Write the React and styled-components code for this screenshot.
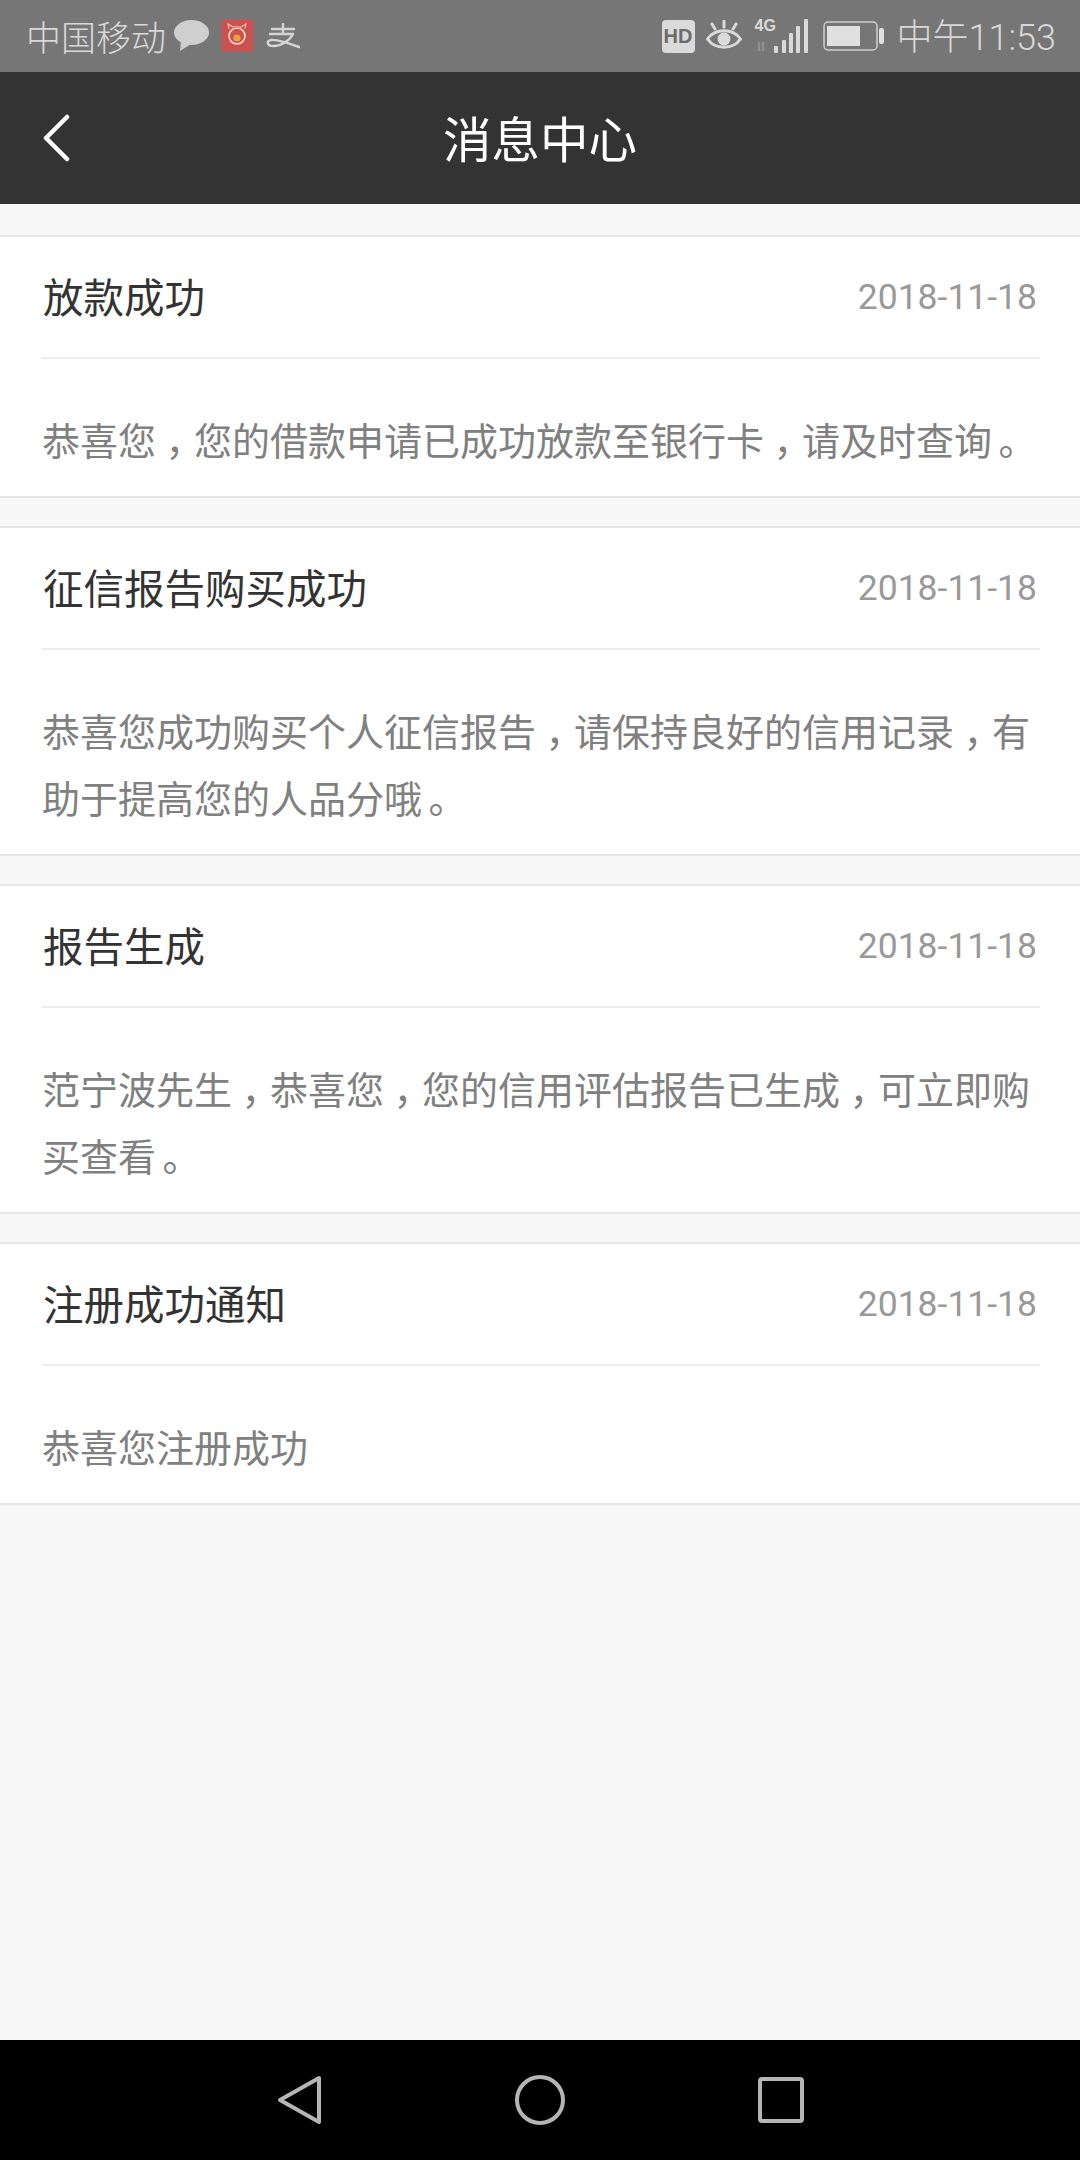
import React from 'react'
import styled, { createGlobalStyle } from 'styled-components'

const FONT = `"Noto Sans CJK SC", "Noto Sans", sans-serif`

const GlobalStyle = createGlobalStyle`
    html, body {
        margin: 0;
        padding: 0;
        background: #f7f7f7;
        font-family: ${FONT};
    }
`

const messages = [
    { title: '放款成功', date: '2018-11-18', body: ['恭喜您，您的借款申请已成功放款至银行卡，请及时查询。'] },
    { title: '征信报告购买成功', date: '2018-11-18', body: ['恭喜您成功购买个人征信报告，请保持良好的信用记录，有', '助于提高您的人品分哦。'] },
    { title: '报告生成', date: '2018-11-18', body: ['范宁波先生，恭喜您，您的信用评估报告已生成，可立即购', '买查看。'] },
    { title: '注册成功通知', date: '2018-11-18', body: ['恭喜您注册成功'] },
]

const WechatIcon = () => (
    <svg width="35" height="32" viewBox="0 0 35 32">
        <ellipse cx="17.5" cy="12.5" rx="17.5" ry="12.5" fill="#cfcfcf" />
        <path d="M7 21 L6 31 L17 24 Z" fill="#cfcfcf" />
    </svg>
)

const PigIcon = () => (
    <svg width="32" height="32" viewBox="0 0 32 32">
        <rect width="32" height="32" rx="2" fill="#cb5052" />
        <path d="M8 9 L7 4 L12 7 C14 6 18 6 20 7 L25 4 L24 9" fill="none" stroke="#f2b9a3" strokeWidth="1.2" />
        <circle cx="16" cy="16" r="8" fill="none" stroke="#f8dcc6" strokeWidth="1.6" />
        <circle cx="16" cy="18" r="3.6" fill="#e8a23c" />
    </svg>
)

const AlipayIcon = () => (
    <svg width="34" height="26" viewBox="0 0 34 26" fill="none" stroke="#d4d4d4" strokeWidth="2.4" strokeLinecap="round" strokeLinejoin="round">
        <path d="M6 6 H28 M17 1 V11 M4 11 H27 C24 17 16 23 7 23 C1 23 0 18 5 17 C11 16 22 20 33 24" />
    </svg>
)

const EyeIcon = () => (
    <svg width="36" height="32" viewBox="0 0 36 32" fill="none" stroke="#dadada" strokeWidth="3">
        <path d="M1.5 19 C9 8 27 8 34.5 19 C27 30 9 30 1.5 19 Z" />
        <circle cx="18" cy="19" r="6.5" fill="#dadada" stroke="none" />
        <path d="M18 1 V7 M6 4 L9 9 M30 4 L27 9" strokeLinecap="round" />
    </svg>
)

const SignalIcon = () => (
    <svg width="54" height="36" viewBox="0 0 54 36" fill="#dadada">
        <rect x="19" y="28" width="4" height="7" rx="1" />
        <rect x="27" y="22" width="4" height="13" rx="1" />
        <rect x="34" y="15" width="4" height="20" rx="1" />
        <rect x="41" y="8" width="4" height="27" rx="1" />
        <rect x="49" y="1" width="4" height="34" rx="1" />
        <path d="M4 24 V33 M8 24 V33" stroke="#8f8f8f" strokeWidth="2.5" />
    </svg>
)

const BatteryIcon = () => (
    <svg width="62" height="30" viewBox="0 0 62 30" fill="none">
        <rect x="1" y="1" width="53" height="28" rx="4" stroke="#cfcfcf" strokeWidth="1.5" />
        <rect x="4" y="5" width="33" height="20" fill="#e0e0e0" />
        <rect x="56" y="7" width="5" height="16" rx="2" fill="#e0e0e0" />
    </svg>
)

const BackArrow = () => (
    <svg width="30" height="48" viewBox="0 0 30 48" fill="none">
        <path d="M26 3 L5 24 L26 45" stroke="#fff" strokeWidth="4.5" strokeLinecap="round" strokeLinejoin="round" />
    </svg>
)

// 标点在格子里居中，和原图的字体一致
const renderLine = line => line.split(/([，。])/).map((part, i) => (
    i % 2 === 1 ? <Punct key={i} $period={part === '。'}>{part}</Punct> : part
))

export default function App () {
    return (
        <Page>
            <GlobalStyle />
            <StatusBar>
                <StatusGroup>
                    <Carrier>中国移动</Carrier>
                    <Slot $gap={8}><WechatIcon /></Slot>
                    <Slot $gap={12}><PigIcon /></Slot>
                    <Slot $gap={13}><AlipayIcon /></Slot>
                </StatusGroup>
                <StatusGroup>
                    <HdBadge>HD</HdBadge>
                    <Slot $gap={11}><EyeIcon /></Slot>
                    <SignalWrap>
                        <NetworkLabel>4G</NetworkLabel>
                        <SignalIcon />
                    </SignalWrap>
                    <Slot $gap={14}><BatteryIcon /></Slot>
                    <Clock>中午11:53</Clock>
                </StatusGroup>
            </StatusBar>
            <Header>
                <BackButton><BackArrow /></BackButton>
                <HeaderTitle>消息中心</HeaderTitle>
            </Header>
            <MessageList>
                {messages.map(item => (
                    <MessageCard key={item.title}>
                        <TitleRow>
                            <Title>{item.title}</Title>
                            <DateText>{item.date}</DateText>
                        </TitleRow>
                        <Body>
                            {item.body.map(line => <BodyLine key={line}>{renderLine(line)}</BodyLine>)}
                        </Body>
                    </MessageCard>
                ))}
            </MessageList>
            <NavBar>
                <svg width="46" height="52" viewBox="0 0 46 52" fill="none">
                    <path d="M43 4 L4 26 L43 48 Z" stroke="#b5b5b5" strokeWidth="4" strokeLinejoin="round" />
                </svg>
                <svg width="50" height="50" viewBox="0 0 50 50" fill="none">
                    <circle cx="25" cy="25" r="23" stroke="#b5b5b5" strokeWidth="4" />
                </svg>
                <svg width="46" height="46" viewBox="0 0 46 46" fill="none">
                    <rect x="2" y="2" width="42" height="42" rx="2" stroke="#b5b5b5" strokeWidth="4" />
                </svg>
            </NavBar>
        </Page>
    )
}

const Page = styled.div`
    width: 1080px;
    height: 2160px;
    display: flex;
    flex-direction: column;
    background-color: #f7f7f7;
    overflow: hidden;
`

const StatusBar = styled.div`
    height: 72px;
    flex: none;
    display: flex;
    align-items: center;
    justify-content: space-between;
    padding: 0 24px 0 26px;
    background-color: #767676;
    color: #d8d8d8;
`

const StatusGroup = styled.div`
    display: flex;
    align-items: center;
`

const Slot = styled.span`
    display: flex;
    margin-left: ${p => p.$gap}px;
`

const Carrier = styled.span`
    font-size: 35px;
    line-height: 40px;
    font-weight: 300;
`

const HdBadge = styled.span`
    width: 33px;
    height: 33px;
    border-radius: 4px;
    background-color: #dadada;
    color: #6c6c6c;
    font: bold 20px/33px "Liberation Sans", sans-serif;
    text-align: center;
`

const SignalWrap = styled.div`
    position: relative;
    display: flex;
    margin-left: 13px;
`

const NetworkLabel = styled.span`
    position: absolute;
    left: 0;
    top: -1px;
    font: bold 16px/18px "Liberation Sans Narrow", "Liberation Sans", sans-serif;
    color: #dadada;
`

const Clock = styled.span`
    margin-left: 12px;
    padding-top: 4px;
    font-size: 36px;
    line-height: 40px;
    font-weight: 300;
    color: #d8d8d8;
    font-family: "Roboto", ${FONT};
`

const Header = styled.div`
    position: relative;
    height: 132px;
    flex: none;
    display: flex;
    align-items: center;
    justify-content: center;
    padding-bottom: 3px;
    box-sizing: border-box;
    background-color: #333;
`

const BackButton = styled.div`
    position: absolute;
    left: 41px;
    top: 42px;
    display: flex;
`

const HeaderTitle = styled.div`
    font-size: 48.5px;
    line-height: 60px;
    color: #fff;
`

const MessageList = styled.div`
    flex: 1;
    display: flex;
    flex-direction: column;
    gap: 28px;
    padding-top: 31px;
`

const MessageCard = styled.div`
    background-color: #fff;
    border-top: 2px solid #e6e6e6;
    border-bottom: 2px solid #e6e6e6;
`

const TitleRow = styled.div`
    height: 122px;
    margin: 0 40px 0 42px;
    padding-right: 3px;
    padding-bottom: 2px;
    display: flex;
    align-items: center;
    justify-content: space-between;
    border-bottom: 2px solid #ececec;
    box-sizing: border-box;
`

const Title = styled.div`
    font-size: 40.5px;
    line-height: 50px;
    color: #333;
    margin-left: 1px;
`

const DateText = styled.div`
    font-size: 35.5px;
    line-height: 44px;
    color: #999;
    font-family: "Roboto", sans-serif;
    padding-top: 2px;
`

const Body = styled.div`
    padding: 46px 40px 24px 42px;
`

const BodyLine = styled.div`
    font-size: 38px;
    line-height: 67px;
    color: #808080;
    white-space: nowrap;
`

const Punct = styled.span`
    display: inline-block;
    width: ${p => (p.$period ? '0.84em' : '1em')};
    padding-right: ${p => (p.$period ? '0.16em' : '0')};
    text-align: center;
    font-feature-settings: "halt";
`

const NavBar = styled.div`
    height: 120px;
    flex: none;
    display: flex;
    align-items: center;
    justify-content: center;
    gap: 193px;
    background-color: #000;
`
